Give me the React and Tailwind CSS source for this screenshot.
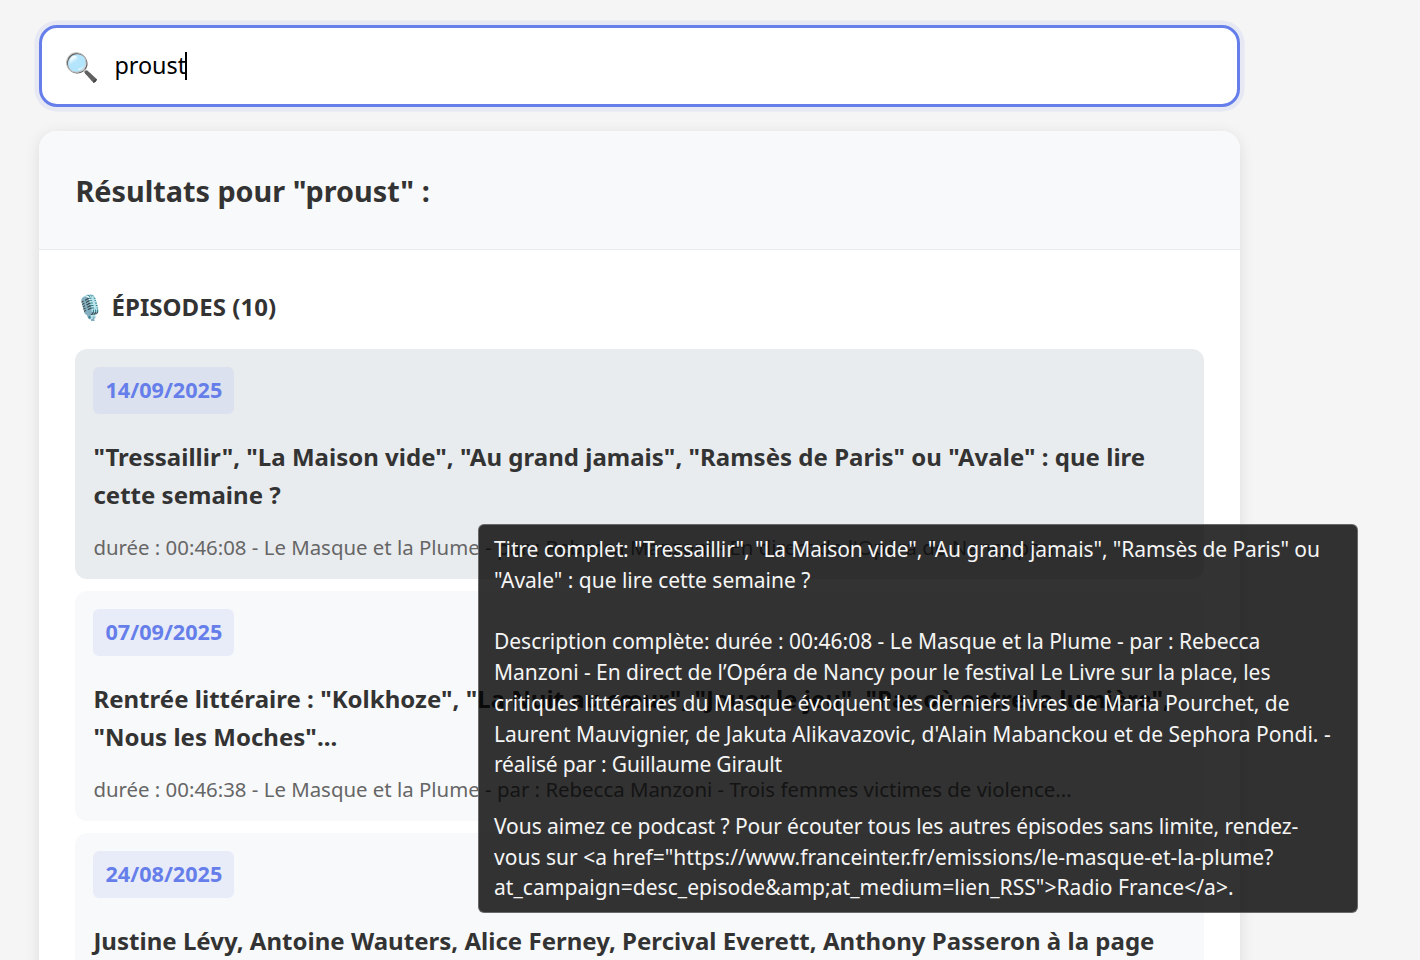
import React from "react";

const episodes = [
  {
    date: "14/09/2025",
    lines: ['"Tressaillir", "La Maison vide", "Au grand jamais", "Ramsès de Paris" ou "Avale" : que lire', "cette semaine ?"],
    desc: "durée : 00:46:08 - Le Masque et la Plume - par : Rebecca Manzoni - En direct de l'Opéra de Nancy pou...",
    active: true,
  },
  {
    date: "07/09/2025",
    lines: ['Rentrée littéraire : "Kolkhoze", "La Nuit au cœur", "Jouer le jeu", "Par où entre la lumière",', '"Nous les Moches"...'],
    desc: "durée : 00:46:38 - Le Masque et la Plume - par : Rebecca Manzoni - Trois femmes victimes de violence...",
  },
  {
    date: "24/08/2025",
    lines: ["Justine Lévy, Antoine Wauters, Alice Ferney, Percival Everett, Anthony Passeron à la page"],
    desc: "",
  },
];

const tooltip = [
  ['Titre complet: "Tressaillir", "La Maison vide", "Au grand jamais", "Ramsès de Paris" ou', "tracking-[-0.1px]"],
  ['"Avale" : que lire cette semaine ?', "tracking-[-0.03px]"],
  ["", ""],
  ["Description complète: durée : 00:46:08 - Le Masque et la Plume - par : Rebecca", "tracking-[-0.03px]"],
  ["Manzoni - En direct de l’Opéra de Nancy pour le festival Le Livre sur la place, les", "tracking-[-0.036px]"],
  ["critiques littéraires du Masque évoquent les derniers livres de Maria Pourchet, de", "tracking-[-0.036px]"],
  ["Laurent Mauvignier, de Jakuta Alikavazovic, d'Alain Mabanckou et de Sephora Pondi. -", "tracking-[0.01px]"],
  ["réalisé par : Guillaume Girault", "tracking-[-0.16px]"],
  ["", ""],
  ["Vous aimez ce podcast ? Pour écouter tous les autres épisodes sans limite, rendez-", "tracking-[-0.07px]"],
  ['vous sur <a href="https://www.franceinter.fr/emissions/le-masque-et-la-plume?', "tracking-[0.01px]"],
  ['at_campaign=desc_episode&amp;at_medium=lien_RSS">Radio France</a>.', "tracking-[0.045px]"],
];

export default function App() {
  return (
    <div className="relative h-[960px] w-[1420px] overflow-hidden bg-[#f5f5f5] pl-[39.4px] pt-[25px] font-['Noto_Sans',sans-serif] text-[#333]">
      <div className="flex h-[82px] w-[1200.3px] items-center rounded-[18px] border-[3px] border-[#667eea] bg-white pl-[22px] shadow-[0_0_0_4.5px_rgba(102,126,234,0.1)]">
        <span className="w-[34px] text-[28px]">🔍</span>
        <span className="ml-4 -mt-px text-[23.4px] text-black">proust</span>
        <span className="-ml-px h-7 w-[2px] bg-black" />
      </div>

      <div className="mt-6 h-[1000px] w-[1200.3px] overflow-hidden rounded-[18px] bg-white shadow-[0_3px_15px_rgba(0,0,0,0.1)]">
        <div className="flex h-[119px] items-center border-b border-[#e9ecef] bg-[#f8f9fa] px-9 pt-[2px]">
          <h3 className="text-[28.8px] font-bold">Résultats pour "proust" :</h3>
        </div>
        <div className="px-9 pt-9">
          <h4 className="flex h-[40px] items-center pt-[2px] text-[24px] font-bold tracking-[0.05px]">
            <span className="mr-[6px]">🎙️</span>ÉPISODES (10)
          </h4>
          <div className="mt-[23.4px] flex flex-col gap-3">
            {episodes.map((e) => (
              <article key={e.date} className={`h-[229.9px] rounded-xl px-[18px] pt-[18px] ${e.active ? "bg-[#e9ecef]" : "bg-[#f8f9fa]"}`}>
                <div className="flex h-[46.5px] w-[141px] items-center justify-center rounded-md bg-[#667eea]/10 text-[21.6px] font-bold text-[#667eea]">{e.date}</div>
                <div className="mt-6 whitespace-nowrap text-[24px] font-bold leading-[38.6px] tracking-[0.02px]">
                  {e.lines.map((l) => <div key={l}>{l}</div>)}
                </div>
                {e.desc && <p className="mt-4 whitespace-nowrap text-[20.4px] leading-[32px] text-[#666]">{e.desc}</p>}
              </article>
            ))}
          </div>
        </div>
      </div>

      <div className="absolute left-[478px] top-[524px] h-[389px] w-[880px] rounded-md border border-[#808080]/70 bg-black/80 pl-[15px] pt-[9px] text-[21px] leading-[30.75px] text-[#f5f5f5]">
        {tooltip.map(([t, track], i) => (
          <div key={i} className="h-[30.75px] whitespace-nowrap"><span className={track}>{t}</span></div>
        ))}
      </div>
    </div>
  );
}
